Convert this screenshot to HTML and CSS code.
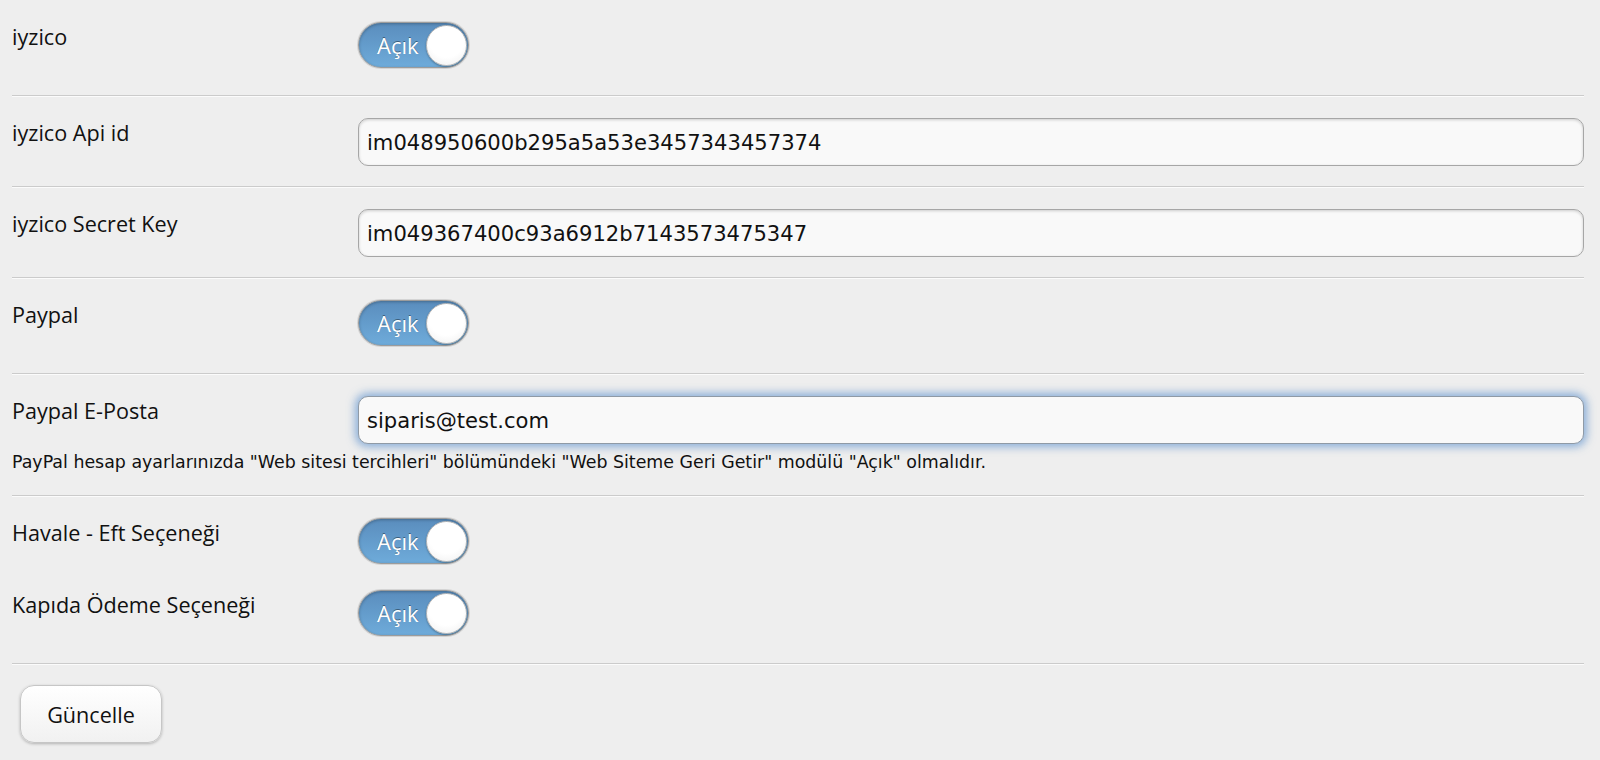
FILE: index.html
```html
<!DOCTYPE html>
<html lang="tr">
<head>
  <meta charset="UTF-8" />
  <meta name="viewport" content="width=device-width, initial-scale=1.0" />
  <title>Ödeme Ayarları</title>
  <link rel="stylesheet" href="styles.css">
</head>
<body>
  <form class="settings">
    <div class="section">
      <div class="row">
        <label class="label">iyzico</label>
        <div class="control">
          <div class="toggle on"><span class="toggle-text">Açık</span><span class="knob"></span></div>
        </div>
      </div>
    </div>

    <div class="section">
      <div class="row">
        <label class="label" for="apiId">iyzico Api id</label>
        <div class="control">
          <input class="field" id="apiId" type="text" value="im048950600b295a5a53e3457343457374">
        </div>
      </div>
    </div>

    <div class="section">
      <div class="row">
        <label class="label" for="secretKey">iyzico Secret Key</label>
        <div class="control">
          <input class="field" id="secretKey" type="text" value="im049367400c93a6912b7143573475347">
        </div>
      </div>
    </div>

    <div class="section">
      <div class="row">
        <label class="label">Paypal</label>
        <div class="control">
          <div class="toggle on"><span class="toggle-text">Açık</span><span class="knob"></span></div>
        </div>
      </div>
    </div>

    <div class="section">
      <div class="row">
        <label class="label" for="paypalMail">Paypal E-Posta</label>
        <div class="control">
          <input class="field focused" id="paypalMail" type="text" value="siparis@test.com">
        </div>
      </div>
      <p class="help">PayPal hesap ayarlarınızda "Web sitesi tercihleri" bölümündeki "Web Siteme Geri Getir" modülü "Açık" olmalıdır.</p>
    </div>

    <div class="section">
      <div class="row">
        <label class="label">Havale - Eft Seçeneği</label>
        <div class="control">
          <div class="toggle on"><span class="toggle-text">Açık</span><span class="knob"></span></div>
        </div>
      </div>
      <div class="row">
        <label class="label">Kapıda Ödeme Seçeneği</label>
        <div class="control">
          <div class="toggle on"><span class="toggle-text">Açık</span><span class="knob"></span></div>
        </div>
      </div>
    </div>

    <div class="actions">
      <button type="button" class="btn">Güncelle</button>
    </div>
  </form>
  <script>
    const mail = document.getElementById("paypalMail");
    mail.focus();
    mail.setSelectionRange(mail.value.length, mail.value.length);
  </script>
</body>
</html>
```

FILE: styles.css
```css
body {
  margin: 0;
  background-color: #eeeeee;
  color: #111;
  font-family: 'Open Sans', 'Noto Sans', sans-serif;
}
.settings {
  padding: 0 16px 0 12px;
}
.section {
  padding: 22px 0 20px;
  border-bottom: 1px solid #cbcbcb;
  box-shadow: 0 1px 0 #fbfbfb;
}
.row {
  display: grid;
  grid-template-columns: 346px 1fr;
}
.row + .row {
  margin-top: 19px;
}
.label {
  font-size: 21.6px;
  line-height: 29px;
}
.field {
  box-sizing: border-box;
  width: 100%;
  height: 48px;
  margin: 0;
  padding: 0 8px;
  font-family: 'DejaVu Sans', Verdana, sans-serif;
  font-size: 21.1px;
  color: #111;
  caret-color: #111;
  background-color: #f9f9f9;
  border: 1px solid #a6a6a6;
  border-radius: 10px;
  box-shadow: inset 0 1px 3px rgba(0,0,0,0.18);
  outline: none;
}
.field.focused {
  border-color: #8f9aa6;
  box-shadow: 0 0 8px 3px rgba(98,148,206,0.7);
}
.help {
  margin: 6px 0 0;
  font-family: 'DejaVu Sans', Verdana, sans-serif;
  font-size: 17.4px;
  line-height: 25px;
}
.toggle {
  box-sizing: border-box;
  display: flex;
  align-items: center;
  justify-content: space-between;
  width: 111px;
  height: 46px;
  margin-bottom: 7px;
  padding: 0 1px 0 18px;
  border: 1px solid #9c9c9c;
  border-radius: 23px;
  background: linear-gradient(#5a8dbd, #6eabda);
  box-shadow: 0 0 0 1px #d4d4d4, inset 0 1px 3px rgba(0,0,0,0.25);
}
.toggle-text {
  color: #fff;
  font-size: 22px;
  text-shadow: 0 -1px 0 rgba(0,0,0,0.4);
}
.knob {
  box-sizing: border-box;
  width: 41px;
  height: 41px;
  border-radius: 50%;
  background: radial-gradient(circle at 50% 35%, #ffffff 55%, #eeeeee);
  border: 1px solid #b8b8b8;
  box-shadow: 0 1px 2px rgba(0,0,0,0.3);
}
.actions {
  padding: 21px 0 16px 8px;
}
.btn {
  width: 142px;
  height: 58px;
  font-family: 'Open Sans', 'Noto Sans', sans-serif;
  font-size: 21.6px;
  color: #111;
  background: linear-gradient(#ffffff, #f1f1f1);
  border: 1px solid #c6c6c6;
  border-radius: 14px;
  box-shadow: 0 1px 3px rgba(0,0,0,0.25);
  cursor: pointer;
}
```
